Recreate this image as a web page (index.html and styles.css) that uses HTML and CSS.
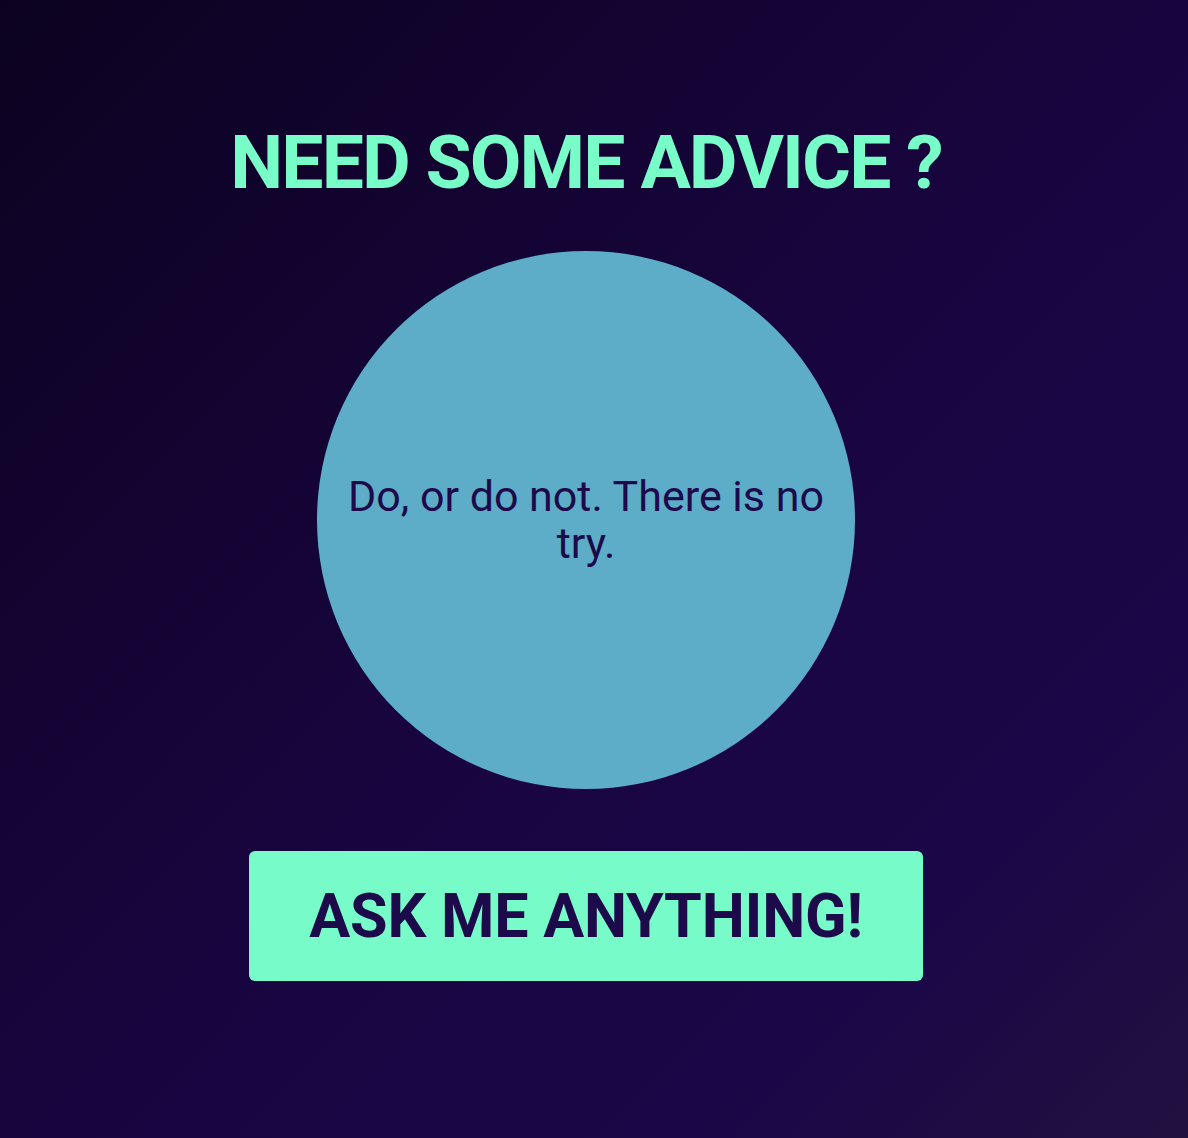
FILE: index.html
```html
<!DOCTYPE html>
<html lang="en">
<head>
<meta charset="utf-8">
<title>Need some advice?</title>
<link rel="stylesheet" href="styles.css">
</head>
<body>
<main class="app">
  <h1 class="title">NEED SOME ADVICE ?</h1>
  <div class="ball">
    <p class="advice">Do, or do not. There is no try.</p>
  </div>
  <button class="ask">ASK ME ANYTHING!</button>
</main>
</body>
</html>
```
FILE: styles.css
```css
html, body {
  margin: 0;
  padding: 0;
}
body {
  min-height: 100vh;
  background: linear-gradient(135deg, #0c0220 0%, #190541 55%, #1b0747 80%, #21113f 100%);
  font-family: Roboto, "Liberation Sans", sans-serif;
}
.app {
  display: flex;
  flex-direction: column;
  align-items: center;
  padding: 118px 16px 0 0;
  min-height: 1138px;
  box-sizing: border-box;
}
.title {
  margin: 0;
  font-size: 75px;
  font-weight: 700;
  line-height: 88px;
  letter-spacing: -1.9px;
  color: #78fcc8;
}
.ball {
  margin-top: 45px;
  width: 538px;
  height: 538px;
  border-radius: 50%;
  background: #5dacc8;
  display: flex;
  align-items: center;
  justify-content: center;
  padding: 0 30px;
  box-sizing: border-box;
}
.advice {
  margin: 0;
  font-size: 43px;
  line-height: 47px;
  font-weight: 400;
  color: #1c0a4a;
  text-align: center;
}
.ask {
  margin-top: 62px;
  width: 674px;
  height: 130px;
  border: none;
  border-radius: 6px;
  background: #77fbc8;
  color: #1c0a4a;
  font-family: Roboto, "Liberation Sans", sans-serif;
  font-size: 61px;
  font-weight: 700;
  letter-spacing: -0.2px;
  cursor: pointer;
}
```
